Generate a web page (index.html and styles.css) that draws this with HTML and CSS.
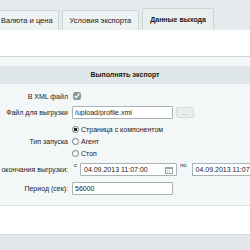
FILE: index.html
```html
<!DOCTYPE html>
<html lang="ru">
<head>
  <meta charset="UTF-8" />
  <title>Экспорт профиля</title>
  <link rel="stylesheet" href="styles.css">
</head>
<body>
  <div class="tabs">
    <div class="tab first">Валюта и цена</div>
    <div class="tab">Условия экспорта</div>
    <div class="tab active">Данные выхода</div>
  </div>

  <div class="panel">
    <div class="form-box">
      <div class="form-head">Выполнять экспорт</div>

      <div class="form-grid">
        <div class="label">В XML файл</div>
        <div class="field"><input type="checkbox" class="check" checked /></div>

        <div class="label">Файл для выгрузки</div>
        <div class="field">
          <input type="text" class="text-input" value="/upload/profile.xml" />
          <button class="dots-btn">...</button>
        </div>

        <div class="label">Тип запуска</div>
        <div class="field radios">
          <label class="radio"><span class="dot checked"></span>Страница с компонентом</label>
          <label class="radio"><span class="dot"></span>Агент</label>
          <label class="radio"><span class="dot"></span>Стоп</label>
        </div>

        <div class="label">окончания выгрузки:</div>
        <div class="field">
          <span class="sep">с</span>
          <div class="date-input">
            <span>04.09.2013 11:07:00</span>
            <svg class="cal" width="8" height="8" viewBox="0 0 8 8">
              <rect x="0.5" y="1.5" width="7" height="6" fill="#fff" stroke="#9aa4a8" />
              <rect x="0.5" y="1.5" width="7" height="1.5" fill="#9aa4a8" />
              <path d="M2 4.5h1M4 4.5h1M2 6h1M4 6h1" stroke="#b5bdc0" />
            </svg>
          </div>
          <span class="sep sep-to">по</span>
          <div class="date-input date-to">
            <span>04.09.2013 11:07</span>
          </div>
        </div>

        <div class="label">Период (сек):</div>
        <div class="field">
          <input type="text" class="text-input" value="56000" />
        </div>
      </div>
    </div>
  </div>

  <div class="footer"></div>
</body>
</html>
```

FILE: styles.css
```css
body {
  margin: 0;
  font-family: 'Liberation Sans', Arial, sans-serif;
  font-size: 7px;
  color: #1a1a1a;
  background-color: #e5eaec;
  overflow: hidden;
}

.tabs {
  display: flex;
  align-items: flex-end;
  height: 30px;
  margin-left: -8px;
  font-size: 7.5px;
}

.tab {
  height: 19px;
  line-height: 19px;
  padding: 0 7px;
  margin-right: 3px;
  background-color: #eff2f2;
  border: 1px solid #cdd4d6;
  border-bottom: none;
  border-radius: 2px 2px 0 0;
  white-space: nowrap;
}

.tab.first {
  padding-left: 8px;
  padding-right: 5px;
}

.tab.active {
  height: 21px;
  line-height: 21px;
  padding: 0 7px;
  font-size: 7px;
  font-weight: bold;
  background-color: #e9eeef;
}

.panel {
  background-color: #ffffff;
  padding: 26px 0 28px;
}

.form-box {
  background-color: #f4f7f8;
  border-top: 1px solid #cdd4d6;
  border-bottom: 1px solid #dde3e5;
  padding-top: 9px;
  padding-bottom: 10px;
}

.form-head {
  height: 18px;
  line-height: 18px;
  background-color: #dfe6e8;
  text-align: center;
  font-weight: bold;
}

.form-grid {
  display: grid;
  grid-template-columns: 68px 1fr;
  column-gap: 4px;
  row-gap: 6px;
  padding-top: 8px;
}

.label {
  display: flex;
  justify-content: flex-end;
  align-items: center;
  white-space: nowrap;
}

.field {
  display: flex;
  align-items: center;
  white-space: nowrap;
}

.check {
  width: 8px;
  height: 8px;
  margin: 0 0 0 1px;
  accent-color: #8b969a;
}

.text-input {
  box-sizing: border-box;
  width: 101px;
  height: 13px;
  padding: 0 2px;
  margin: 0;
  font-family: inherit;
  font-size: 7px;
  color: #1a1a1a;
  background-color: #fff;
  border: 1px solid #a9b2b6;
  border-radius: 1px;
}

.dots-btn {
  box-sizing: border-box;
  width: 18px;
  height: 11px;
  margin-left: 3px;
  padding: 0;
  font-size: 6px;
  color: #8a9498;
  background-color: #e8edee;
  border: 1px solid #d6dcde;
  border-radius: 2px;
}

.radios {
  flex-direction: column;
  align-items: flex-start;
  gap: 4px;
}

.radio {
  display: flex;
  align-items: center;
  height: 8px;
}

.dot {
  box-sizing: border-box;
  width: 7px;
  height: 7px;
  margin-right: 2px;
  border: 1px solid #6d777b;
  border-radius: 50%;
  background-color: #fff;
}

.dot.checked {
  background: radial-gradient(circle, #222 0 1.5px, #fff 2px);
}

.sep {
  align-self: flex-start;
  margin: -1px 3px 0 2px;
  font-size: 6px;
}

.sep-to {
  margin: -1px 5px 0 3px;
}

.date-input {
  box-sizing: border-box;
  display: flex;
  align-items: center;
  justify-content: space-between;
  flex: none;
  width: 97px;
  height: 13px;
  padding: 0 3px;
  background-color: #fff;
  border: 1px solid #a9b2b6;
  border-radius: 1px;
}

.date-to {
  width: 60px;
  border-right: none;
}

.footer {
  height: 14px;
  background-color: #e2e8ea;
  border-top: 1px solid #d6dde0;
}
```
